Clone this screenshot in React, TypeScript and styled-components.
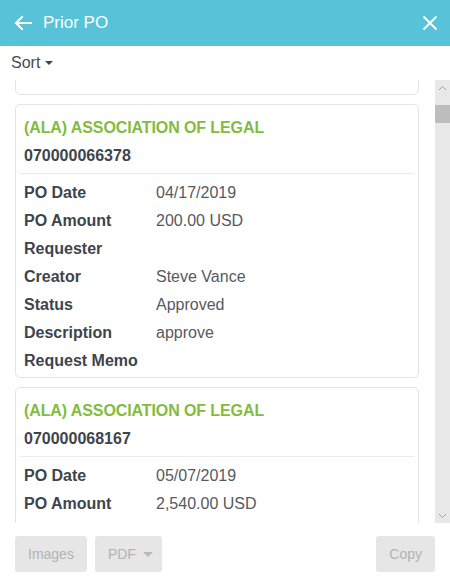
import { useLayoutEffect, useRef, type FC } from 'react'
import { styled, createGlobalStyle } from 'styled-components'

interface PurchaseOrder {
  vendor: string
  number: string
  date: string
  amount: string
  requester: string
  creator: string
  status: string
  description: string
  memo: string
}

const orders: PurchaseOrder[] = [
  {
    vendor: '(ALA) ASSOCIATION OF LEGAL',
    number: '070000065120',
    date: '03/28/2019',
    amount: '150.00 USD',
    requester: '',
    creator: 'Steve Vance',
    status: 'Approved',
    description: 'approve',
    memo: '\u00a0\n\u00a0'
  },
  {
    vendor: '(ALA) ASSOCIATION OF LEGAL',
    number: '070000066378',
    date: '04/17/2019',
    amount: '200.00 USD',
    requester: '',
    creator: 'Steve Vance',
    status: 'Approved',
    description: 'approve',
    memo: ''
  },
  {
    vendor: '(ALA) ASSOCIATION OF LEGAL',
    number: '070000068167',
    date: '05/07/2019',
    amount: '2,540.00 USD',
    requester: '',
    creator: 'Steve Vance',
    status: 'Approved',
    description: 'approve',
    memo: ''
  }
]

const GlobalStyle = createGlobalStyle`
  html, body {
    margin: 0;
    padding: 0;
    background: #fff;
    font-family: "Liberation Sans", Arial, sans-serif;
  }
`

const OrderCard: FC<{ order: PurchaseOrder }> = ({ order }) => {
  const rows: Array<[string, string]> = [
    ['PO Date', order.date],
    ['PO Amount', order.amount],
    ['Requester', order.requester],
    ['Creator', order.creator],
    ['Status', order.status],
    ['Description', order.description],
    ['Request Memo', order.memo]
  ]
  return (
    <Card>
      <CardHead>
        <Vendor>{order.vendor}</Vendor>
        <PoNumber>{order.number}</PoNumber>
      </CardHead>
      <Divider />
      <Rows>
        {rows.map(([label, value]) => (
          <Row key={label}>
            <Label>{label}</Label>
            <Value>{value}</Value>
          </Row>
        ))}
      </Rows>
    </Card>
  )
}

const App: FC = () => {
  const listRef = useRef<HTMLDivElement>(null)

  // keep the list scrolled so the second order sits near the top
  useLayoutEffect(() => {
    const list = listRef.current
    if (list == null) return
    const second = list.children[1] as HTMLElement | undefined
    if (second != null) list.scrollTop = second.offsetTop - 24
  }, [])

  return (
    <Page>
      <GlobalStyle />
      <Header>
        <IconButton aria-label="Back">
          <svg width="18" height="16" viewBox="0 0 18 16" fill="none" stroke="#fff" strokeWidth="2" strokeLinecap="square">
            <path d="M2 8h15" />
            <path d="M8 2L2 8l6 6" />
          </svg>
        </IconButton>
        <Title>Prior PO</Title>
        <CloseButton aria-label="Close">
          <svg width="16" height="16" viewBox="0 0 16 16" fill="none" stroke="#fff" strokeWidth="2">
            <path d="M1.5 1.5l13 13M14.5 1.5l-13 13" />
          </svg>
        </CloseButton>
      </Header>
      <SortBar>
        Sort <Caret $color="#444" $size={4} />
      </SortBar>
      <Body>
        <List ref={listRef}>
          {orders.map((o) => <OrderCard key={o.number} order={o} />)}
        </List>
        <ScrollBar>
          <ScrollArrow>
            <svg width="9" height="6" viewBox="0 0 9 6" fill="none" stroke="#a3a3a3" strokeWidth="1">
              <path d="M1 5l3.5-3.5L8 5" />
            </svg>
          </ScrollArrow>
          <Thumb />
          <Track />
          <ScrollArrow>
            <svg width="9" height="6" viewBox="0 0 9 6" fill="none" stroke="#a3a3a3" strokeWidth="1">
              <path d="M1 1l3.5 3.5L8 1" />
            </svg>
          </ScrollArrow>
        </ScrollBar>
      </Body>
      <Footer>
        <Button disabled>Images</Button>
        <Button disabled $caret>PDF <Caret $color="#b9b9b9" $size={5} /></Button>
        <Spacer />
        <Button disabled>Copy</Button>
      </Footer>
    </Page>
  )
}
export default App

const Page = styled.div`
  width: 450px;
  height: 584px;
  display: flex;
  flex-direction: column;
  overflow: hidden;
`

const Header = styled.div`
  height: 46px;
  flex-shrink: 0;
  background: #57c3d8;
  display: flex;
  align-items: center;
  padding: 0 12px 0 14px;
  box-sizing: border-box;
`

const IconButton = styled.div`
  display: flex;
  align-items: center;
  width: 18px;
  height: 16px;
`

const CloseButton = styled(IconButton)`
  margin-left: auto;
  width: 16px;
`

const Title = styled.div`
  color: #fff;
  font-size: 17px;
  margin-left: 11px;
  padding-bottom: 1px;
`

const SortBar = styled.div`
  height: 34px;
  flex-shrink: 0;
  display: flex;
  align-items: center;
  gap: 5px;
  padding: 0 0 0 11px;
  font-size: 16px;
  color: #4a4a4a;
`

const Caret = styled.span<{ $color: string, $size: number }>`
  display: inline-block;
  width: 0;
  height: 0;
  border-left: ${(p) => p.$size}px solid transparent;
  border-right: ${(p) => p.$size}px solid transparent;
  border-top: ${(p) => p.$size}px solid ${(p) => p.$color};
`

const Body = styled.div`
  height: 443px;
  flex-shrink: 0;
  display: flex;
`

const List = styled.div`
  position: relative;
  flex: 1;
  overflow: hidden;
  padding: 8px 16px 0 15px;
`

const Card = styled.div`
  border: 1px solid #e4e4e4;
  border-radius: 5px;
  padding: 9px 4px 2px;
  margin-bottom: 9px;
  background: #fff;
`

const CardHead = styled.div`
  padding: 0 4px 3px;
`

const Vendor = styled.div`
  font-size: 16px;
  font-weight: bold;
  line-height: 28px;
  color: #84bb3e;
  letter-spacing: -0.1px;
`

const PoNumber = styled.div`
  font-size: 16px;
  font-weight: bold;
  line-height: 28px;
  color: #3e444b;
`

const Divider = styled.div`
  height: 1px;
  background: #ececec;
`

const Rows = styled.div`
  padding: 5px 4px 0;
`

const Row = styled.div`
  display: grid;
  grid-template-columns: 132px 1fr;
  min-height: 28px;
  line-height: 28px;
  font-size: 16px;
`

const Label = styled.div`
  font-weight: bold;
  color: #3e444b;
`

const Value = styled.div`
  color: #555a5f;
  white-space: pre-line;
`

const ScrollBar = styled.div`
  width: 15px;
  flex-shrink: 0;
  background: #e8e8e8;
  display: flex;
  flex-direction: column;
`

const ScrollArrow = styled.div`
  height: 15px;
  display: flex;
  align-items: center;
  justify-content: center;
`

const Thumb = styled.div`
  height: 18px;
  margin-top: 10px;
  background: #bdbdbd;
`

const Track = styled.div`
  flex: 1;
`

const Footer = styled.div`
  flex: 1;
  display: flex;
  align-items: flex-start;
  gap: 8px;
  padding: 13px 15px 0;
`

const Spacer = styled.div`
  flex: 1;
`

const Button = styled.button<{ $caret?: boolean }>`
  height: 36px;
  display: flex;
  align-items: center;
  gap: 7px;
  padding: 0 ${(p) => (p.$caret === true ? 9 : 13)}px 0 13px;
  border: none;
  border-radius: 3px;
  background: #e6e6e6;
  color: #b3b3b3;
  font-family: "Liberation Sans", Arial, sans-serif;
  font-size: 14px;
`
